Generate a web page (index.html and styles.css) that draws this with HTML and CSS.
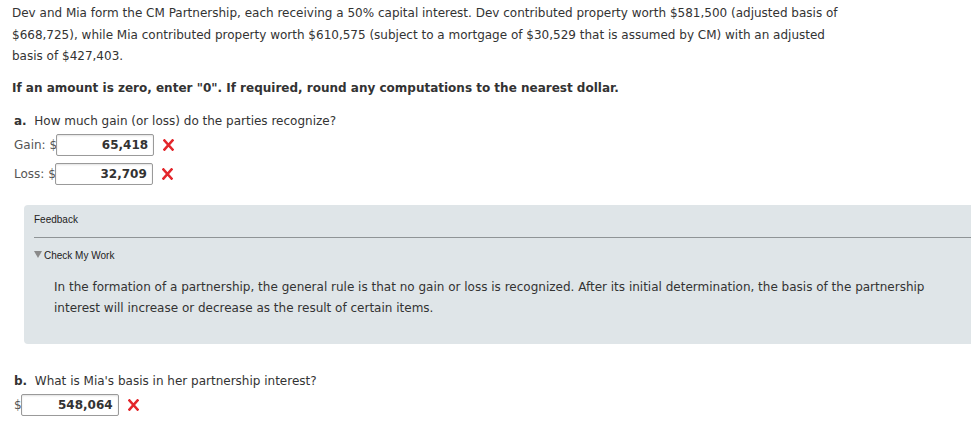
FILE: index.html
```html
<!DOCTYPE html>
<html>
<head>
<meta charset="utf-8">
<link rel="stylesheet" href="styles.css">
</head>
<body>
<div class="page">
  <p class="intro">Dev and Mia form the CM Partnership, each receiving a 50% capital interest. Dev contributed property worth $581,500 (adjusted basis of $668,725), while Mia contributed property worth $610,575 (subject to a mortgage of $30,529 that is assumed by CM) with an adjusted basis of $427,403.</p>
  <p class="instr">If an amount is zero, enter "0". If required, round any computations to the nearest dollar.</p>

  <div class="part parta">
    <div class="question"><b>a.</b>&nbsp; How much gain (or loss) do the parties recognize?</div>
    <div class="row first"><span class="lbl">Gain: $</span><span class="box">65,418</span><svg class="wrong" width="11" height="12" viewBox="0 0 11 12"><path d="M1.5 1.5 L9.5 10.5 M9.5 1.5 L1.5 10.5" stroke="#e3262b" stroke-width="2.6" stroke-linecap="square"/></svg></div>
    <div class="row"><span class="lbl">Loss: $</span><span class="box">32,709</span><svg class="wrong" width="11" height="12" viewBox="0 0 11 12"><path d="M1.5 1.5 L9.5 10.5 M9.5 1.5 L1.5 10.5" stroke="#e3262b" stroke-width="2.6" stroke-linecap="square"/></svg></div>
  </div>

  <div class="feedback">
    <div class="fb-title">Feedback</div>
    <div class="fb-rule"></div>
    <div class="fb-toggle"><span class="tri"></span>Check My Work</div>
    <div class="fb-body">In the formation of a partnership, the general rule is that no gain or loss is recognized. After its initial determination, the basis of the partnership interest will increase or decrease as the result of certain items.</div>
  </div>

  <div class="part partb">
    <div class="question"><b>b.</b>&nbsp; What is Mia's basis in her partnership interest?</div>
    <div class="row first"><span class="lbl">$</span><span class="box">548,064</span><svg class="wrong" width="11" height="12" viewBox="0 0 11 12"><path d="M1.5 1.5 L9.5 10.5 M9.5 1.5 L1.5 10.5" stroke="#e3262b" stroke-width="2.6" stroke-linecap="square"/></svg></div>
  </div>
</div>
</body>
</html>
```

FILE: styles.css
```css
html, body {
  margin: 0;
  padding: 0;
  background: #fff;
}
body {
  font-family: "DejaVu Sans", Verdana, sans-serif;
  font-size: 12px;
  color: #333;
  overflow: hidden;
}
.page {
  padding: 3px 0 0 12px;
}
.intro {
  margin: 0;
  line-height: 21.5px;
  width: 845px;
}
.instr {
  margin: 10px 0 0 0;
  font-weight: bold;
  line-height: 20px;
}
.part {
  padding-left: 2px;
}
.parta {
  margin-top: 13px;
}
.question {
  line-height: 20px;
}
.row {
  display: flex;
  align-items: center;
  height: 22px;
  margin-top: 7px;
}
.row.first {
  margin-top: 3px;
}
.lbl {
  color: #555;
}
.box {
  display: inline-block;
  box-sizing: border-box;
  width: 98px;
  height: 22px;
  line-height: 20px;
  border: 1px solid #9a9a9a;
  border-radius: 2px;
  text-align: right;
  padding-right: 5px;
  font-weight: bold;
  color: #333;
  margin-left: -1px;
  box-shadow: inset 0 1px 2px rgba(0,0,0,0.12);
}
.wrong {
  margin-left: 9px;
  display: block;
}
.feedback {
  margin: 20px -20px 0 12px;
  background: #dfe5e8;
  border-radius: 4px;
  padding: 8px 0 24px 10px;
  font-family: "Liberation Sans", Arial, sans-serif;
  font-size: 10px;
  color: #222;
}
.fb-title {
  line-height: 14px;
}
.fb-rule {
  margin-top: 10px;
  height: 0;
  border-top: 1px solid #8f9496;
}
.fb-toggle {
  margin-top: 11px;
  line-height: 14px;
  display: flex;
  align-items: center;
}
.tri {
  display: inline-block;
  width: 0;
  height: 0;
  border-left: 4px solid transparent;
  border-right: 4px solid transparent;
  border-top: 7px solid #8a8a8a;
  margin-right: 2px;
  margin-top: -2px;
}
.fb-body {
  margin: 14px 40px 0 20px;
  font-family: "DejaVu Sans", Verdana, sans-serif;
  font-size: 12px;
  color: #333;
  line-height: 21.5px;
}
.partb {
  margin-top: 27px;
}
```
